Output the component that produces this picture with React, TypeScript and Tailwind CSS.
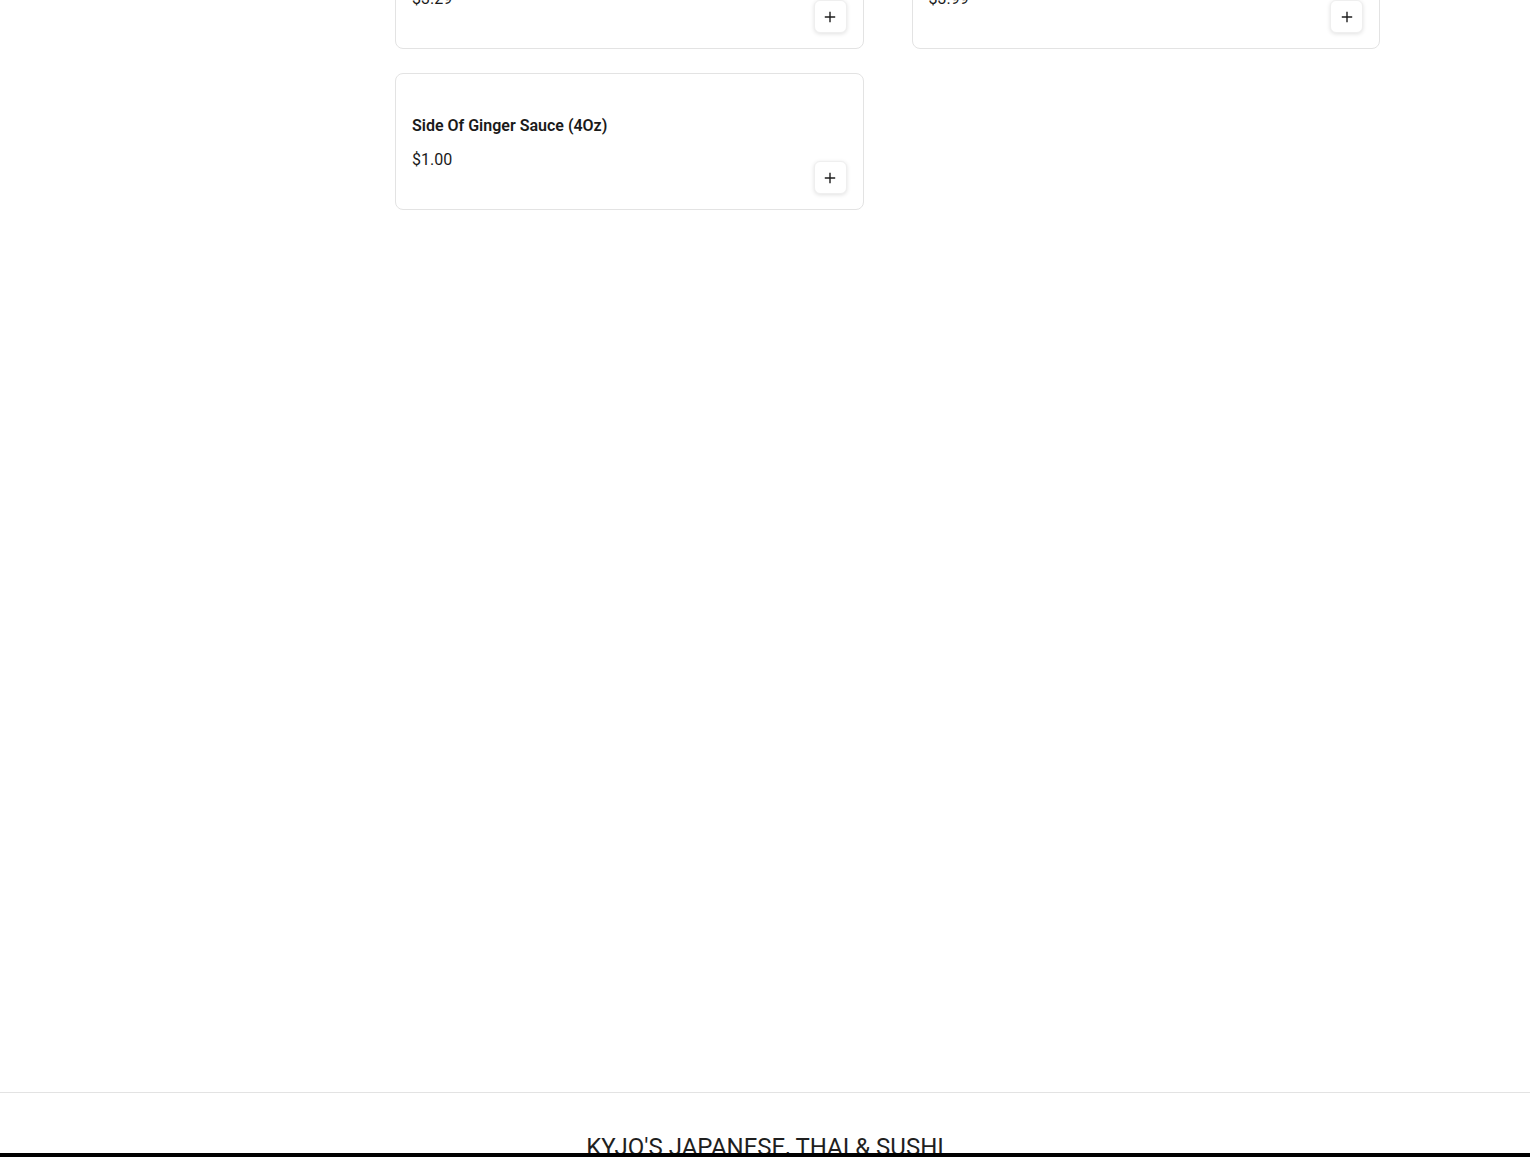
import React from 'react';

type Item = {
  name: string;
  price: string;
};

const rowOne: Item[] = [
  { name: 'Side Of Eel Sauce (4Oz)', price: '$3.29' },
  { name: 'Side Of Spicy Mayo (4Oz)', price: '$3.99' },
];

const rowTwo: Item[] = [{ name: 'Side Of Ginger Sauce (4Oz)', price: '$1.00' }];

const PlusIcon = () => (
  <svg width="12" height="12" viewBox="0 0 12 12" fill="none">
    <path d="M6 1.5v9M1.5 6h9" stroke="#1f1f1f" strokeWidth="1.4" strokeLinecap="square" />
  </svg>
);

const MenuCard: React.FC<{ item: Item }> = ({ item }) => (
  <div className="flex items-end justify-between rounded-lg border border-[#e3e3e3] bg-white px-4 pt-4 pb-[15px]">
    <div className="flex flex-col pt-6 pb-[22px]">
      <h3 className="text-base leading-6 font-semibold text-[#1a1a1a]">{item.name}</h3>
      <p className="mt-2.5 text-base leading-6 text-[#1a1a1a]">{item.price}</p>
    </div>
    <button className="flex h-[33px] w-[33px] items-center justify-center rounded-md border border-[#efefef] bg-white shadow-[0_1px_4px_rgba(0,0,0,0.12)]">
      <PlusIcon />
    </button>
  </div>
);

const App: React.FC = () => {
  return (
    <div className="min-h-screen bg-white font-['Roboto','Liberation_Sans',sans-serif]">
      <main className="-mt-[88px] min-h-[1180px]">
        <div className="mx-auto flex w-[1230px] gap-8">
          <aside className="w-[213px] shrink-0" />
          <section className="grid flex-1 grid-cols-2 content-start gap-x-12 gap-y-6">
            {rowOne.map((item) => (
              <MenuCard key={item.name} item={item} />
            ))}
            {rowTwo.map((item) => (
              <MenuCard key={item.name} item={item} />
            ))}
          </section>
        </div>
      </main>

      <footer className="border-t border-[#e3e3e3] pt-[38px] pb-16">
        <h2 className="text-center text-2xl leading-8 font-normal text-[#1f1f1f]">KYJO'S JAPANESE, THAI &amp; SUSHI</h2>
      </footer>

      <div className="fixed right-0 bottom-0 left-0 h-1 bg-black" />
    </div>
  );
};

export default App;
